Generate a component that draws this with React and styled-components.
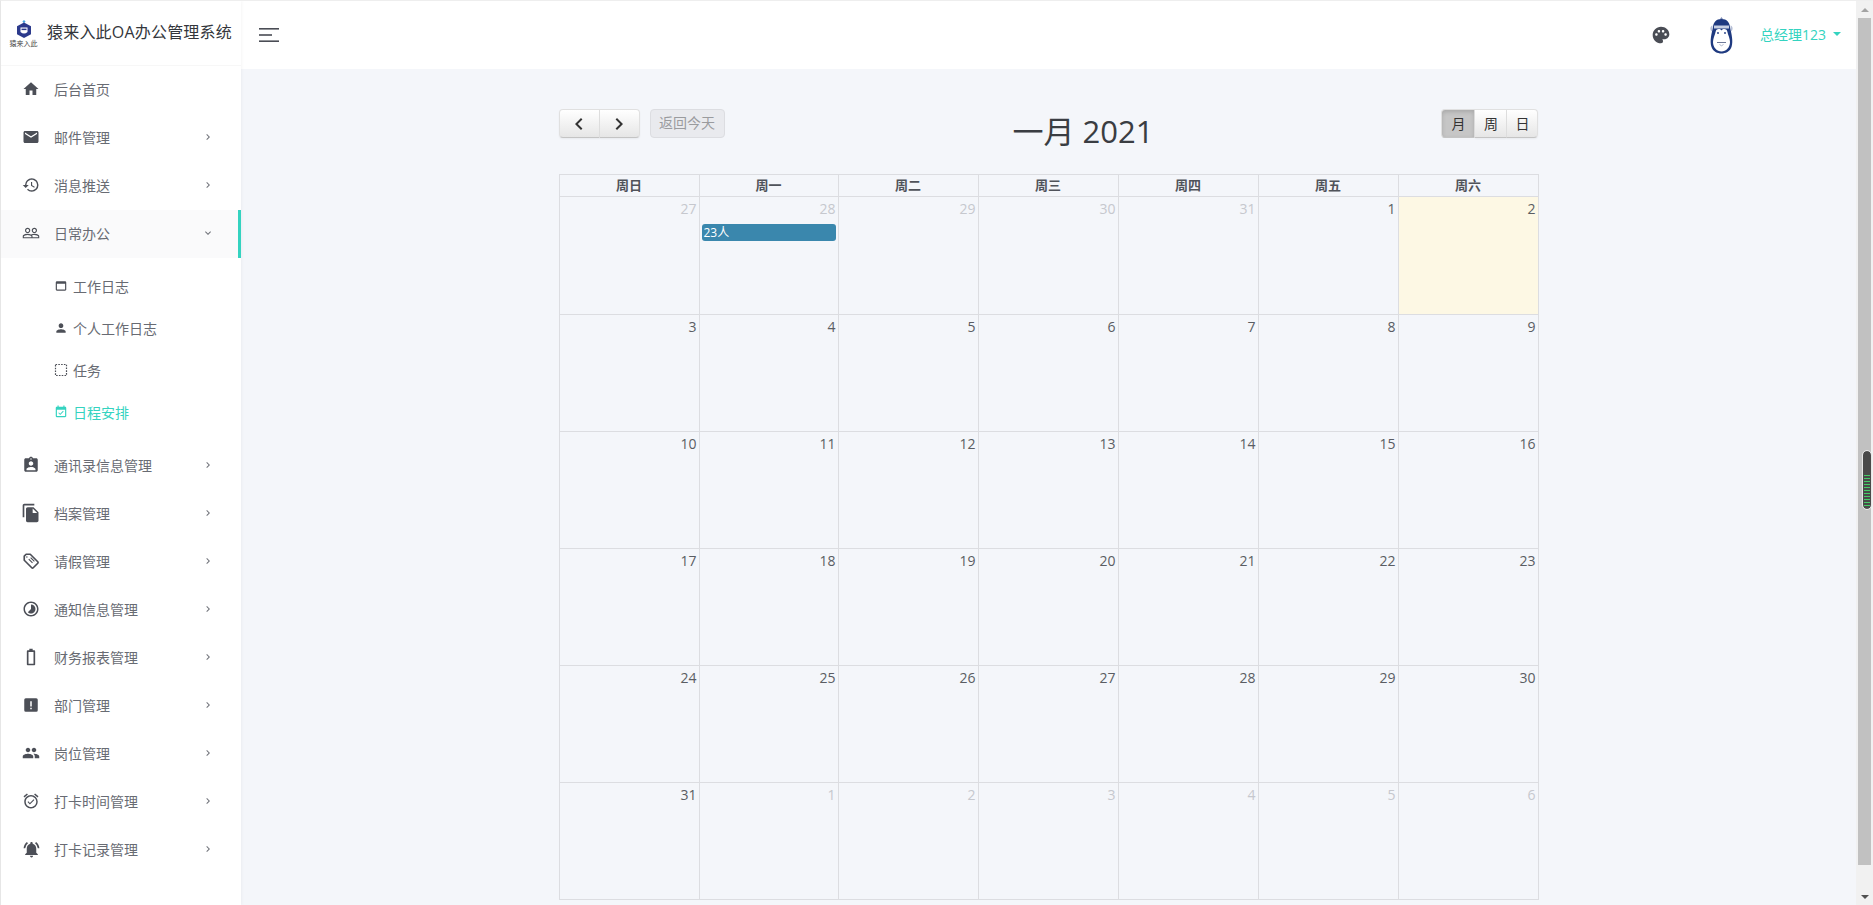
import React from 'react'
import styled, { createGlobalStyle } from 'styled-components'
import {
  MdHome, MdEmail, MdHistory, MdPeopleOutline, MdWebAsset, MdPerson,
  MdEventAvailable, MdAssignmentInd, MdFileCopy, MdTimelapse, MdPeople,
  MdAlarmOn, MdNotificationsActive, MdPalette, MdKeyboardArrowRight, MdKeyboardArrowDown,
  MdChevronLeft, MdChevronRight, MdBattery0Bar,
} from 'react-icons/md'

const accent = '#34d3c0'
const line = '#dcdde1'
const columns = '140px 139px 140px 140px 140px 140px 140px'

const GlobalStyle = createGlobalStyle`
  html, body { margin: 0; padding: 0; height: 100%; overflow: hidden; }
  body { font-family: "Open Sans", "Noto Sans CJK SC", sans-serif; font-size: 14px; color: #676a6c; }
  * { box-sizing: border-box; }
`

// these three are not in the icon set
const NoticeIcon = ({ size }) => (
  <svg width={size} height={size} viewBox="0 0 24 24" fill="currentColor">
    <path d="M5 3h14a2 2 0 0 1 2 2v14a2 2 0 0 1-2 2H5a2 2 0 0 1-2-2V5a2 2 0 0 1 2-2zm6 4v7h2V7h-2zm0 8.5v2h2v-2h-2z" fillRule="evenodd" />
  </svg>
)

const DottedSquare = ({ size }) => (
  <svg width={size} height={size} viewBox="0 0 14 14" fill="none" stroke="currentColor" strokeWidth="1.2" strokeDasharray="1.6 1.2">
    <rect x="1.500" y="1.500" width="11" height="11" />
  </svg>
)

const TagIcon = ({ size }) => (
  <svg width={size} height={size} viewBox="0 0 24 24" fill="none" stroke="currentColor">
    <path d="M3 5.500 5.500 3H11l10 10c.6.6.6 1.400 0 2l-6 6c-.6.6-1.400.6-2 0L3 11z" strokeWidth="2.200" strokeLinejoin="round" />
    <path d="M9 9.500l5 5M11.500 7.500l5 5" strokeWidth="1.500" />
    <circle cx="6.500" cy="6.500" r="1" fill="currentColor" stroke="none" />
  </svg>
)

const menu = [
  { label: '后台首页', Icon: MdHome, leaf: true },
  { label: '邮件管理', Icon: MdEmail },
  { label: '消息推送', Icon: MdHistory },
  {
    label: '日常办公', Icon: MdPeopleOutline, open: true,
    children: [
      { label: '工作日志', Icon: MdWebAsset },
      { label: '个人工作日志', Icon: MdPerson },
      { label: '任务', Icon: DottedSquare },
      { label: '日程安排', Icon: MdEventAvailable, current: true },
    ],
  },
  { label: '通讯录信息管理', Icon: MdAssignmentInd },
  { label: '档案管理', Icon: MdFileCopy, size: 20 },
  { label: '请假管理', Icon: TagIcon },
  { label: '通知信息管理', Icon: MdTimelapse },
  { label: '财务报表管理', Icon: MdBattery0Bar, size: 20 },
  { label: '部门管理', Icon: NoticeIcon },
  { label: '岗位管理', Icon: MdPeople },
  { label: '打卡时间管理', Icon: MdAlarmOn },
  { label: '打卡记录管理', Icon: MdNotificationsActive, size: 19 },
]

const weekDays = ['周日', '周一', '周二', '周三', '周四', '周五', '周六']

const days = [
  [27, 28, 29, 30, 31], [1, 2, 3, 4, 5, 6, 7, 8, 9, 10, 11, 12, 13, 14, 15, 16, 17, 18, 19, 20, 21, 22, 23, 24, 25, 26, 27, 28, 29, 30, 31], [1, 2, 3, 4, 5, 6],
]

const cells = [
  ...days[0].map((n) => ({ n, muted: true })),
  ...days[1].map((n) => ({ n })),
  ...days[2].map((n) => ({ n, muted: true })),
]

const App = () => (
  <Page>
    <GlobalStyle />
    <Sidebar>
      <Brand>
        <Logo>
          <svg width="16" height="19" viewBox="0 0 16 19">
            <path d="M8 0l1.6 1.600L8 3.200 6.400 1.600z" fill="#4aa8e0" />
            <path d="M8 2.500l7 3.800v8L8 18l-7-3.700v-8z" fill="#2c3a8c" />
            <path d="M4.500 7.500h7V12q-3.500 3-7 0z" fill="#fff" />
            <path d="M5.500 8.600h5v1.500h-5z" fill="#2c3a8c" />
          </svg>
          <LogoName>猿来入此</LogoName>
        </Logo>
        <BrandTitle>猿来入此OA办公管理系统</BrandTitle>
      </Brand>
      <nav>
        {menu.map(({ label, Icon, leaf, open, children, size }) => (
          <div key={label}>
            <NavItem $open={open}>
              <NavIcon><Icon size={size || 18} /></NavIcon>
              <NavLabel>{label}</NavLabel>
              {!leaf && (
                <NavArrow>
                  {open ? <MdKeyboardArrowDown size={12} /> : <MdKeyboardArrowRight size={12} />}
                </NavArrow>
              )}
            </NavItem>
            {children && (
              <SubMenu>
                {children.map((c) => (
                  <SubItem key={c.label} $current={c.current}>
                    <c.Icon size={14} />
                    {c.label}
                  </SubItem>
                ))}
              </SubMenu>
            )}
          </div>
        ))}
      </nav>
    </Sidebar>

    <Main>
      <Header>
        <MenuToggle>
          <svg width="20" height="14" viewBox="0 0 20 14" fill="#4a4d55">
            <rect y="0" width="20" height="1.600" />
            <rect y="6.200" width="13" height="1.600" />
            <rect y="12.400" width="20" height="1.600" />
          </svg>
        </MenuToggle>
        <HeaderRight>
          <PaletteButton><MdPalette size={20} /></PaletteButton>
          <svg width="25" height="37" viewBox="0 0 25 37">
            <path d="M12.500 0l1.800 2.500h-3.600z" fill="#7d8cb5" />
            <path d="M12.500 2C7 2 4.500 5.500 4 10 2.500 17 .5 24 2.500 30c1.500 4.500 6 6.500 10 6.500s8.500-2 10-6.500c2-6 0-13-1.500-20-.5-4.500-3-8-8.500-8z" fill="#1f3a80" />
            <path d="M3.500 8.500C1 9 .5 13 3 14.500zM21.500 8.500c2.500.5 3 4.500.5 6z" fill="#b6bfd6" />
            <path d="M5 8.500h15v3H5z" fill="#c7cfe2" />
            <path d="M12.500 13.500c-1.500-2-5-2-5.800 1-.8 3.500-2.700 7-2.700 10.500 0 5.500 4 9.500 8.500 9.500S21 30.500 21 25c0-3.500-1.900-7-2.700-10.500-.8-3-4.300-3-5.800-1z" fill="#fff" />
            <circle cx="9" cy="16" r=".9" fill="#1f3a80" />
            <circle cx="16" cy="16" r=".9" fill="#1f3a80" />
            <path d="M8 25.500h9" stroke="#6f7a99" strokeWidth="1" />
            <path d="M10.500 27.500q2 2.500 4 0" fill="none" stroke="#aeb6cb" strokeWidth="1" />
          </svg>
          <UserMenu>
            总经理123
            <Caret />
          </UserMenu>
        </HeaderRight>
      </Header>

      <Content>
        <Calendar>
          <Toolbar>
            <ToolGroup>
              <ButtonGroup>
                <CalButton $w={41} $first><MdChevronLeft size={24} /></CalButton>
                <CalButton $w={40} $last><MdChevronRight size={24} /></CalButton>
              </ButtonGroup>
              <TodayButton>返回今天</TodayButton>
            </ToolGroup>
            <CalTitle>一月 2021</CalTitle>
            <ButtonGroup>
              <CalButton $w={34} $first $active $text>月</CalButton>
              <CalButton $w={32} $text>周</CalButton>
              <CalButton $w={31} $last $text>日</CalButton>
            </ButtonGroup>
          </Toolbar>
          <HeadRow>
            {weekDays.map((d) => <HeadCell key={d}>{d}</HeadCell>)}
          </HeadRow>
          <MonthGrid>
            {cells.map((c, i) => (
              <DayCell key={i} $today={!c.muted && c.n === 2}>
                <DayNumber $muted={c.muted}>{c.n}</DayNumber>
                {i === 1 && <CalEvent>23人</CalEvent>}
              </DayCell>
            ))}
          </MonthGrid>
        </Calendar>
      </Content>
    </Main>

    <Scrollbar>
      <ScrollArrow $up />
      <ScrollThumb />
      <ScrollArrow />
      <MeterWidget />
    </Scrollbar>
  </Page>
)

const Page = styled.div`
  display: flex;
  height: 905px;
  border-top: 1px solid #eee;
  border-left: 1px solid #e6e6e6;
  position: relative;
  overflow: hidden;
`

const Sidebar = styled.aside`
  width: 240px;
  flex: none;
  background: #fff;
  box-shadow: 1px 0 3px rgba(0, 0, 0, 0.04);
  position: relative;
  z-index: 1;
`

const Brand = styled.div`
  height: 65px;
  display: flex;
  align-items: center;
  gap: 9px;
  padding-left: 8px;
  border-bottom: 1px solid #f7f7f7;
`

const Logo = styled.div`
  width: 29px;
  display: flex;
  flex-direction: column;
  align-items: center;
  line-height: 1;
`

const LogoName = styled.span`
  font-size: 7px;
  color: #444;
  white-space: nowrap;
  margin-top: 1px;
`

const BrandTitle = styled.span`
  font-size: 16px;
  letter-spacing: 0.2px;
  color: #33363c;
  white-space: nowrap;
  margin-bottom: 5px;
`

const NavItem = styled.div`
  height: 48px;
  display: flex;
  align-items: center;
  padding: 0 0 2px 21px;
  position: relative;
  background: ${(p) => (p.$open ? '#fafafb' : 'transparent')};
  border-right: 3px solid ${(p) => (p.$open ? accent : 'transparent')};
`

const NavIcon = styled.span`
  width: 18px;
  height: 18px;
  color: #4c4f57;
  display: flex;
  align-items: center;
  justify-content: center;
  flex: none;
  margin-right: 14px;

  svg { flex: none; }
`

const NavLabel = styled.span`
  flex: 1;
  color: #686b73;
`

const NavArrow = styled.span`
  display: flex;
  color: #70737a;
  margin-right: 24px;
`

const SubMenu = styled.div`
  padding: 8px 0;
`

const SubItem = styled.div`
  height: 42px;
  display: flex;
  align-items: center;
  gap: 5px;
  padding: 0 0 2px 53px;
  font-size: 14px;
  color: ${(p) => (p.$current ? accent : '#686b73')};
  svg { color: ${(p) => (p.$current ? accent : '#4c4f57')}; }
`

const Main = styled.div`
  flex: 1;
  min-width: 0;
  display: flex;
  flex-direction: column;
  background: #f4f6fa;
`

const Header = styled.header`
  height: 68px;
  flex: none;
  background: #fff;
  display: flex;
  align-items: center;
  justify-content: space-between;
  padding: 0 15px 0 18px;
`

const MenuToggle = styled.div`
  display: flex;
`

const HeaderRight = styled.div`
  display: flex;
  align-items: center;
`

const PaletteButton = styled.span`
  display: flex;
  color: #4a4d55;
  margin-right: 38px;
`

const UserMenu = styled.span`
  display: flex;
  align-items: center;
  color: ${accent};
  font-size: 14px;
  margin-left: 26px;
  padding-bottom: 2px;
`

const Caret = styled.i`
  width: 0;
  height: 0;
  margin-left: 7px;
  border-left: 4px solid transparent;
  border-right: 4px solid transparent;
  border-top: 4px solid ${accent};
`

const Content = styled.main`
  flex: 1;
  padding-top: 40px;
`

const Calendar = styled.div`
  width: 980px;
  margin: 0 auto;
`

const Toolbar = styled.div`
  height: 65px;
  display: flex;
  justify-content: space-between;
  align-items: flex-start;
`

const ToolGroup = styled.div`
  display: flex;
  gap: 10px;
`

const ButtonGroup = styled.div`
  display: flex;
`

const CalButton = styled.div`
  width: ${(p) => p.$w}px;
  height: 29px;
  display: flex;
  align-items: center;
  justify-content: center;
  padding-bottom: ${(p) => (p.$text ? 2 : 0)}px;
  font-size: 14px;
  color: #333;
  border: 1px solid #e0e0e0;
  border-bottom-color: #c4c4c4;
  border-left-width: ${(p) => (p.$first ? 1 : 0)}px;
  border-radius: ${(p) => (p.$first ? '4px 0 0 4px' : p.$last ? '0 4px 4px 0' : '0')};
  background: ${(p) => (p.$active ? '#c6c6c6' : 'linear-gradient(#fff, #e6e6e6)')};
  box-shadow: ${(p) => (p.$active ? 'inset 0 2px 4px rgba(0,0,0,.15)' : '0 1px 2px rgba(0,0,0,.05)')};
`

const TodayButton = styled.div`
  width: 75px;
  height: 29px;
  display: flex;
  align-items: center;
  justify-content: center;
  padding-bottom: 3px;
  font-size: 14px;
  color: #9a9b9e;
  background: #e9eaee;
  border: 1px solid #dcdde1;
  border-radius: 4px;
`

const CalTitle = styled.h2`
  margin: 2px 0 0;
  font-size: 31px;
  font-weight: 400;
  line-height: 40px;
  color: #3a3d42;
`

const HeadRow = styled.div`
  display: grid;
  grid-template-columns: ${columns};
  height: 23px;
  border-top: 1px solid ${line};
  border-left: 1px solid ${line};
  border-bottom: 1px solid ${line};
`

const HeadCell = styled.div`
  display: flex;
  align-items: center;
  justify-content: center;
  padding-bottom: 2px;
  font-size: 13px;
  font-weight: 700;
  color: #50535a;
  border-right: 1px solid ${line};
`

const MonthGrid = styled.div`
  display: grid;
  grid-template-columns: ${columns};
  grid-template-rows: 118px repeat(5, 117px);
  border-left: 1px solid ${line};
`

const DayCell = styled.div`
  padding: 0 2px;
  border-right: 1px solid ${line};
  border-bottom: 1px solid ${line};
  background: ${(p) => (p.$today ? '#fdf8e4' : 'transparent')};
`

const DayNumber = styled.div`
  text-align: right;
  font-size: 14px;
  line-height: 21px;
  padding-top: 1px;
  color: ${(p) => (p.$muted ? '#c6c8ce' : '#5a5d63')};
`

const CalEvent = styled.div`
  height: 17px;
  margin-top: 5px;
  padding-left: 2px;
  border-radius: 3px;
  background: #3a87ad;
  color: #fff;
  font-size: 12px;
  line-height: 18px;
`

const Scrollbar = styled.div`
  width: 17px;
  flex: none;
  background: #f1f1f1;
  display: flex;
  flex-direction: column;
  align-items: center;
  position: relative;
`

const ScrollArrow = styled.div`
  height: 17px;
  flex: none;
  display: flex;
  align-items: center;
  &::before {
    content: '';
    border-left: 4px solid transparent;
    border-right: 4px solid transparent;
    ${(p) => (p.$up ? 'border-bottom: 4px solid #a3a3a3;' : 'border-top: 4px solid #505050;')}
  }
`

const ScrollThumb = styled.div`
  width: 13px;
  flex: 1;
  margin-bottom: 23px;
  background: #c1c1c1;
`

const MeterWidget = styled.div`
  position: absolute;
  top: 450px;
  left: 7px;
  width: 8px;
  height: 58px;
  border-radius: 4px;
  outline: 1px solid #e8e8e8;
  background:
    repeating-linear-gradient(#45cc66 0 1px, #4a4a4a 1px 3px) 1px 24px / 6px 33px no-repeat,
    #4a4a4a;
`

export default App
